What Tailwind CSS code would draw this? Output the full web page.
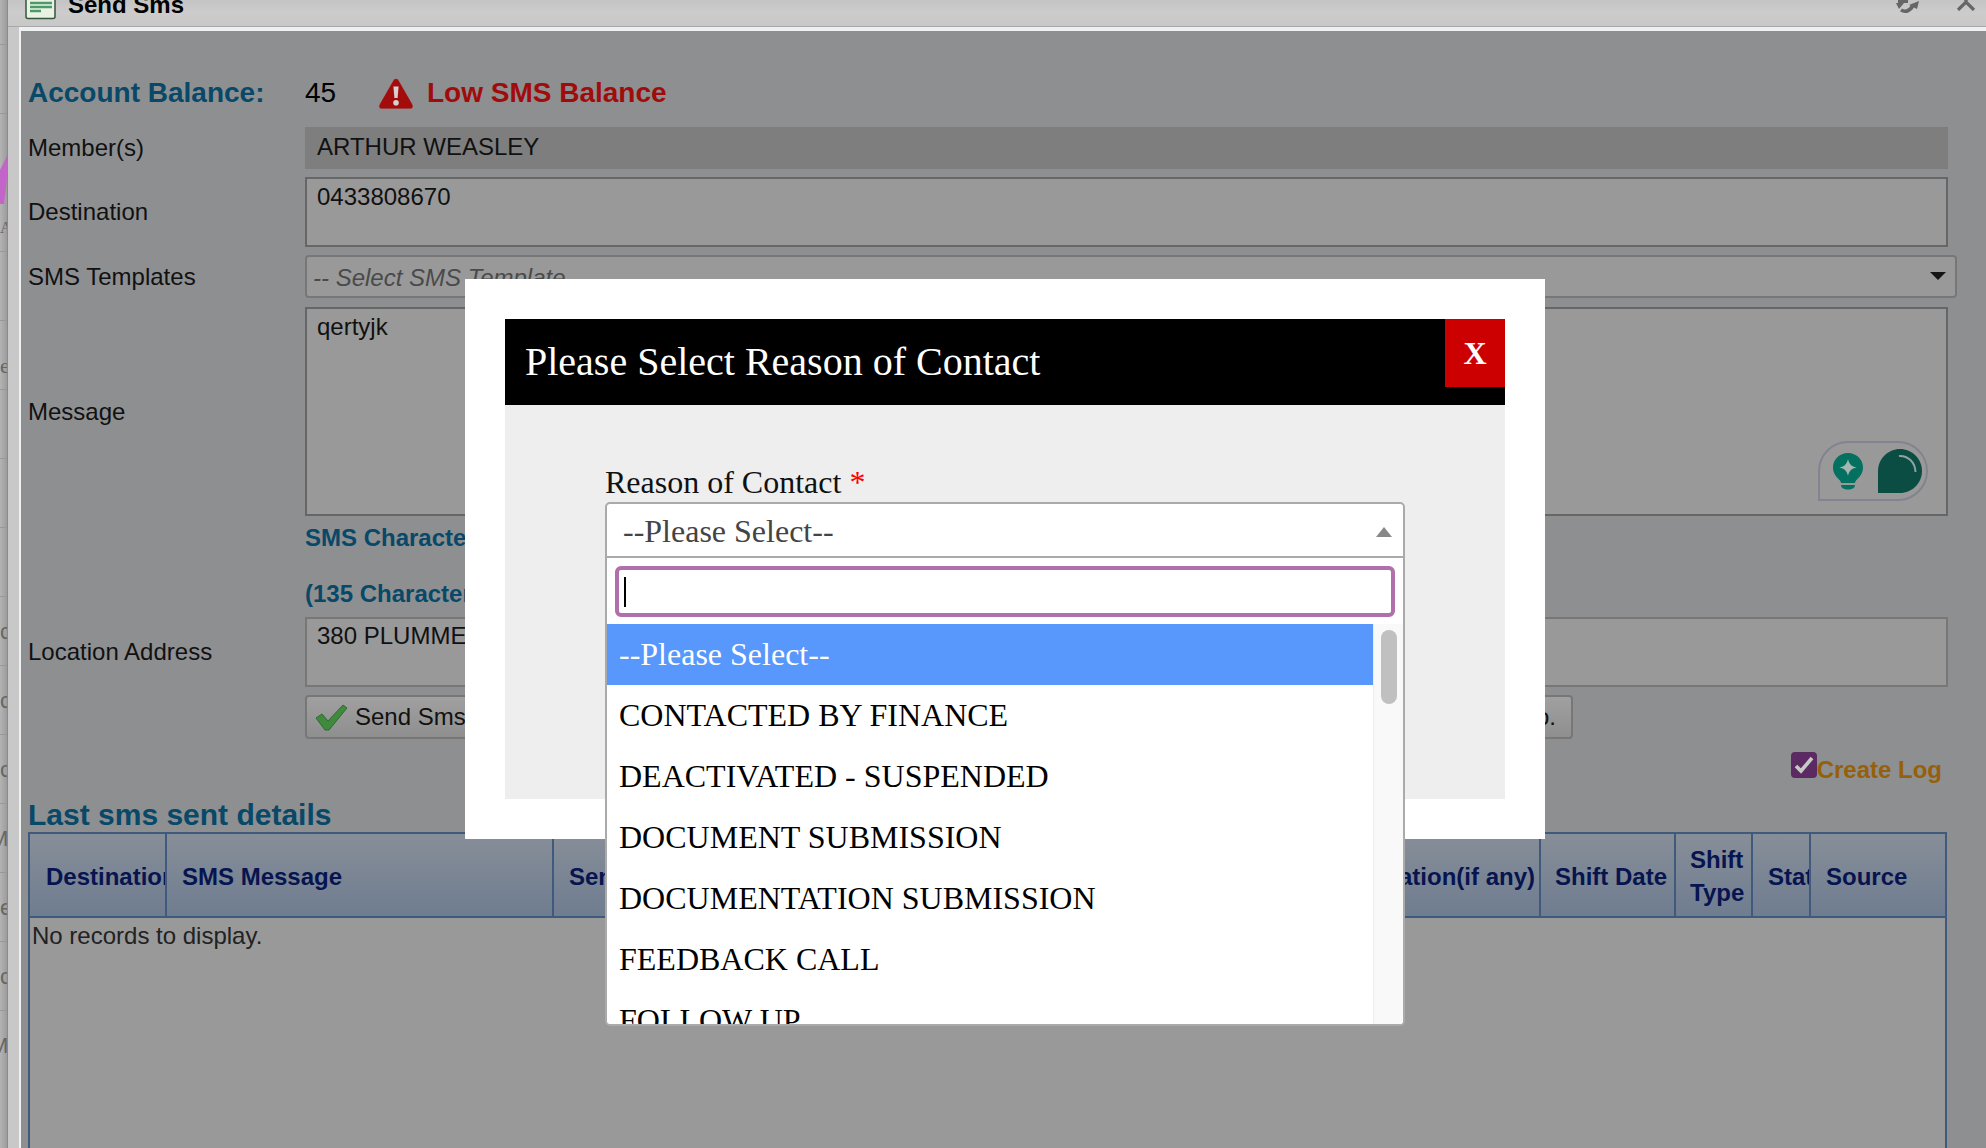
<!DOCTYPE html>
<html lang="en">
  <head>
    <meta charset="UTF-8" />
    <meta name="viewport" content="width=device-width, initial-scale=1.0" />
    <script src="https://cdn.jsdelivr.net/npm/@tailwindcss/browser@4"></script>
    <title>Send Sms</title>
  </head>
  <body class="bg-[#c8c8c8]">
    <div class="relative flex w-[1986px] h-[1148px] overflow-hidden font-['Liberation_Sans',Arial,sans-serif] text-[24px] text-[#111]">
      <!-- page behind the window, only a sliver shows -->
      <div class="relative w-[8px] shrink-0 overflow-hidden border-r border-[#8a8a8a] bg-gradient-to-r from-[#b4b4b4] to-[#9c9c9c] text-[#666] font-['Liberation_Serif',serif]">
        <div class="h-[45px] border-b border-[#999]"></div>
        <div class="h-[69px] border-b border-[#999]"></div>
        <div class="h-[69px] border-b border-[#999]"></div>
        <div class="h-[69px] border-b border-[#999] text-[16px] leading-[90px]">A</div>
        <div class="h-[69px] border-b border-[#999]"></div>
        <div class="h-[69px] border-b border-[#999] text-[22px] leading-[90px]">e</div>
        <div class="h-[69px] border-b border-[#999]"></div>
        <div class="h-[69px] border-b border-[#999]"></div>
        <div class="h-[69px] border-b border-[#999]"></div>
        <div class="h-[69px] border-b border-[#999] text-[22px] leading-[69px] font-['Liberation_Sans',sans-serif]">c</div>
        <div class="h-[69px] border-b border-[#999] text-[22px] leading-[69px] font-['Liberation_Sans',sans-serif]">c</div>
        <div class="h-[69px] border-b border-[#999] text-[22px] leading-[69px] font-['Liberation_Sans',sans-serif]">c</div>
        <div class="h-[69px] border-b border-[#999] text-[22px] leading-[69px] font-['Liberation_Sans',sans-serif] -indent-[10px]">M</div>
        <div class="h-[69px] border-b border-[#999] text-[22px] leading-[69px] font-['Liberation_Sans',sans-serif]">e</div>
        <div class="h-[69px] border-b border-[#999] text-[22px] leading-[69px] font-['Liberation_Sans',sans-serif]">c</div>
        <div class="h-[69px] text-[22px] leading-[69px] font-['Liberation_Sans',sans-serif] -indent-[10px]">M</div>
        <svg class="absolute left-0 top-[156px]" width="8" height="48" viewBox="0 0 8 48"><path d="M0 14 L7 0 L7 22 L4 48 L0 48 Z" fill="#c264c8" /></svg>
      </div>

      <div class="flex min-w-0 flex-1 flex-col">
        <!-- window title bar -->
        <div class="relative h-[27px] shrink-0 border-b border-[#a8a8a8] bg-gradient-to-b from-[#c4c4c4] via-[#cccccc] to-[#c8c8c8]">
          <svg class="absolute left-[17px] -top-[8px]" width="31" height="28" viewBox="0 0 31 28">
            <rect x="1" y="1" width="29" height="25.5" rx="2" fill="#eaf2e4" stroke="#35553c" stroke-width="1.5" />
            <path d="M5 11h22M5 15h22M5 19h11" stroke="#4b9a6a" stroke-width="2.4" />
          </svg>
          <span class="absolute left-[60px] -top-[9px] font-bold leading-[28px] text-black">Send Sms</span>
          <svg class="absolute left-[1888px] top-0" width="24" height="14" viewBox="0 0 24 14" fill="none">
            <path d="M5 10 C10 13 15 10 17 5" stroke="#666" stroke-width="3.6" />
            <path d="M13 5 L23 1 L21 9 Z M2 0 H12 V3 H2 Z M0 3 H8 L3 9 Z" fill="#666" />
          </svg>
          <svg class="absolute left-[1948px] top-0" width="20" height="11" viewBox="0 0 20 11" fill="none">
            <path d="M2 10L10 2L18 10M4 -6L10 0L16 -6" stroke="#666" stroke-width="3.2" />
          </svg>
        </div>

        <div class="min-h-0 flex-1 pl-[11px]">
          <div class="h-full border-t-[4px] border-l-[2px] border-t-[#eef0f2] border-l-[#eef0f2] bg-[#8e8f91] pl-[7px]">
            <div class="flex h-[40px] mt-[42px] items-center">
              <span class="w-[277px] text-[28px] font-bold text-[#084868]">Account Balance:</span>
              <span class="w-[73px] text-[28px] text-black">45</span>
              <svg width="36" height="32" viewBox="0 0 36 32">
                <path d="M18 1.5 C19.5 1.5 20.5 2.5 21 3.5 L34.5 27 C36 30 34.5 32 32 32 H4 C1.5 32 0 30 1.5 27 L15 3.5 C15.5 2.5 16.5 1.5 18 1.5 Z" fill="#a30c0c" stroke="#9b8f8f" stroke-width="0.8" />
                <path d="M15.4 9.5 H20.6 L19.6 21 H16.4 Z" fill="#d8d0d0" />
                <circle cx="18" cy="25.8" r="2.8" fill="#d8d0d0" />
              </svg>
              <span class="ml-[13px] text-[28px] font-bold text-[#a00c0c]">Low SMS Balance</span>
            </div>

            <div class="flex mt-[14px] h-[42px]">
              <span class="w-[277px] self-center">Member(s)</span>
              <div class="w-[1643px] bg-[#7e7e7e] px-[12px] leading-[40px]">ARTHUR WEASLEY</div>
            </div>

            <div class="flex mt-[8px] h-[70px]">
              <span class="w-[277px] self-center">Destination</span>
              <div class="w-[1643px] border-2 border-[#666] bg-[#999] px-[10px] pt-[3px] leading-[30px]">0433808670</div>
            </div>

            <div class="flex mt-[8px] h-[43px]">
              <span class="w-[277px] self-center">SMS Templates</span>
              <div class="relative w-[1652px] rounded-[4px] border-2 border-[#777] bg-[#999] pl-[6px] italic leading-[41px] text-[#4a4a4a]">
                -- Select SMS Template --
                <span class="absolute right-[9px] top-[15px] h-0 w-0 border-x-[8px] border-t-[8px] border-x-transparent border-t-[#151515]"></span>
              </div>
            </div>

            <div class="flex mt-[9px] h-[209px]">
              <span class="w-[277px] self-center">Message</span>
              <div class="relative w-[1643px] border-2 border-[#666] bg-[#999] px-[10px] pt-[3px] leading-[30px]">
                qertyjk
                <div class="absolute right-[18px] bottom-[13px] flex h-[60px] w-[110px] items-center rounded-[30px] rounded-bl-none border-2 border-[#83838f] pl-[12px]">
                  <svg width="32" height="38" viewBox="0 0 32 38">
                    <path d="M16 1 C24.5 1 31 7.5 31 15.5 C31 21 28 24.5 25 27.5 C23.5 29 23 30 23 31 H9 C9 30 8.5 29 7 27.5 C4 24.5 1 21 1 15.5 C1 7.5 7.5 1 16 1 Z" fill="#04705f" />
                    <path d="M16 7 C17 12 19.5 14.5 24.5 15.5 C19.5 16.5 17 19 16 24 C15 19 12.5 16.5 7.5 15.5 C12.5 14.5 15 12 16 7 Z" fill="#a5b5b0" />
                    <path d="M9 33 H23 C23 36 20 37.5 16 37.5 C12 37.5 9 36 9 33 Z" fill="#04705f" />
                  </svg>
                  <svg class="ml-[14px]" width="44" height="44" viewBox="0 0 44 44">
                    <path d="M22 0 C34 0 44 10 44 22 C44 34 34 44 22 44 H0 V22 C0 10 10 0 22 0 Z" fill="#0b4c43" />
                    <path d="M21 7 C30 6.5 37 13 37.5 23" fill="none" stroke="#8fa3a0" stroke-width="2" />
                  </svg>
                </div>
              </div>
            </div>

            <div class="ml-[277px] mt-[7px] h-[30px] font-bold leading-[30px] text-[#084868]">SMS Character Count : 25</div>
            <div class="ml-[277px] mt-[26px] h-[30px] font-bold leading-[30px] text-[#084868]">(135 Characters Left)</div>

            <div class="flex mt-[8px] h-[70px]">
              <span class="w-[277px] self-center">Location Address</span>
              <div class="w-[1643px] border-2 border-[#777] bg-[#999] px-[10px] pt-[2px] leading-[30px]">380 PLUMMER ROAD</div>
            </div>

            <div class="ml-[277px] mt-[8px] flex h-[44px] w-[1268px] justify-between">
              <div class="flex w-[300px] items-center rounded-[4px] border-2 border-[#777] bg-gradient-to-b from-[#a0a0a0] to-[#8f8f8f] pl-[8px]">
                <svg width="33" height="27" viewBox="0 0 33 27"><path d="M1 14 L7 10 L13 17 L28 1 L32 4 L14 26 L10 26 Z" fill="#3f8a3c" stroke="#2d6a30" stroke-width="1" /></svg>
                <span class="ml-[7px]">Send Sms</span>
              </div>
              <div class="flex w-[300px] items-center justify-end rounded-[4px] border-2 border-[#777] bg-gradient-to-b from-[#a0a0a0] to-[#8f8f8f] pr-[15px]">Add Mobile No.</div>
            </div>

            <div class="mt-[15px] flex h-[28px] w-[1914px] items-center justify-end">
              <span class="mb-[6px] flex h-[26px] w-[26px] items-center justify-center rounded-[4px] bg-[#5c2a62]">
                <svg width="20" height="18" viewBox="0 0 20 18"><path d="M2 10 L7 15 L18 2" fill="none" stroke="#c8c8c8" stroke-width="3.6" /></svg>
              </span>
              <span class="mt-[4px] font-bold leading-[28px] text-[#96600a]">Create Log</span>
            </div>

            <div class="mt-[16px] h-[31px] text-[30px] font-bold leading-[34px] text-[#084868]">Last sms sent details</div>

            <!-- last sms table -->
            <div class="mt-[3px] h-[400px] w-[1919px] border-x-2 border-t-2 border-[#3f5a7d] bg-[#999]">
              <div class="flex h-[84px] border-b-2 border-[#3f5a7d] bg-gradient-to-b from-[#878e98] to-[#6f7d90] font-bold text-[#071450]">
                <div class="flex w-[137px] items-center overflow-hidden whitespace-nowrap border-r-2 border-[#3f5a7d] pl-[16px] pt-[3px]">Destination</div>
                <div class="flex w-[387px] items-center overflow-hidden whitespace-nowrap border-r-2 border-[#3f5a7d] pl-[15px] pt-[3px]">SMS Message</div>
                <div class="flex w-[346px] items-center overflow-hidden whitespace-nowrap border-r-2 border-[#3f5a7d] pl-[15px] pt-[3px]">Sender</div>
                <div class="flex w-[641px] items-center justify-end overflow-hidden whitespace-nowrap border-r-2 border-[#3f5a7d] pr-[4px] pt-[3px]">Location(if any)</div>
                <div class="flex w-[135px] items-center overflow-hidden whitespace-nowrap border-r-2 border-[#3f5a7d] pl-[14px] pt-[3px]">Shift Date</div>
                <div class="flex w-[77px] items-center overflow-hidden border-r-2 border-[#3f5a7d] pl-[14px] pt-[1px] leading-[33px]">Shift Type</div>
                <div class="flex w-[58px] items-center overflow-hidden whitespace-nowrap border-r-2 border-[#3f5a7d] pl-[15px] pt-[3px]">Status</div>
                <div class="flex flex-1 items-center overflow-hidden whitespace-nowrap pl-[15px] pt-[3px]">Source</div>
              </div>
              <div class="pl-[2px] pt-[4px] leading-[28px] text-[#222]">No records to display.</div>
            </div>
          </div>
        </div>
      </div>

      <!-- reason of contact dialog -->
      <div class="absolute left-[465px] top-[279px] h-[560px] w-[1080px] bg-white p-[40px] font-['Liberation_Serif','Times_New_Roman',serif] text-[32px]">
        <div class="flex h-[86px] items-start justify-between bg-black pl-[20px] text-white">
          <span class="text-[40px] leading-[86px]">Please Select Reason of Contact</span>
          <span class="flex h-[68px] w-[60px] items-center justify-center bg-[#cc0000] font-bold">X</span>
        </div>
        <div class="h-[394px] bg-[#eeeeee] pl-[100px] pt-[60px]">
          <div class="h-[37px] leading-[35px] text-[#111]">Reason of Contact <span class="text-[#ff0000]">*</span></div>
          <div class="h-[524px] w-[800px] overflow-hidden rounded-[5px] border-2 border-[#aaaaaa] bg-white">
            <div class="relative h-[54px] border-b-2 border-[#aaaaaa] pl-[16px] leading-[55px] text-[#444]">
              --Please Select--
              <span class="absolute right-[11px] top-[23px] h-0 w-0 border-x-[8px] border-b-[10px] border-x-transparent border-b-[#888]"></span>
            </div>
            <div class="relative mx-[8px] mt-[8px] h-[51px] rounded-[6px] border-[4px] border-[#b070ac] bg-white">
              <span class="absolute left-[5px] top-[7px] h-[30px] w-[2px] bg-black"></span>
            </div>
            <div class="mt-[7px] flex">
              <div class="w-[766px] leading-[61px] text-black">
                <div class="h-[61px] bg-[#5897fb] pl-[12px] text-white">--Please Select--</div>
                <div class="h-[61px] pl-[12px]">CONTACTED BY FINANCE</div>
                <div class="h-[61px] pl-[12px]">DEACTIVATED - SUSPENDED</div>
                <div class="h-[61px] pl-[12px]">DOCUMENT SUBMISSION</div>
                <div class="h-[61px] pl-[12px]">DOCUMENTATION SUBMISSION</div>
                <div class="h-[61px] pl-[12px]">FEEDBACK CALL</div>
                <div class="h-[61px] pl-[12px]">FOLLOW UP</div>
              </div>
              <div class="h-[420px] flex-1 border-l border-[#eeeeee] bg-[#f9f9f9] pl-[7px] pt-[6px]">
                <div class="h-[74px] w-[16px] rounded-full bg-[#c0c0c0]"></div>
              </div>
            </div>
          </div>
        </div>
      </div>
    </div>
  </body>
</html>
